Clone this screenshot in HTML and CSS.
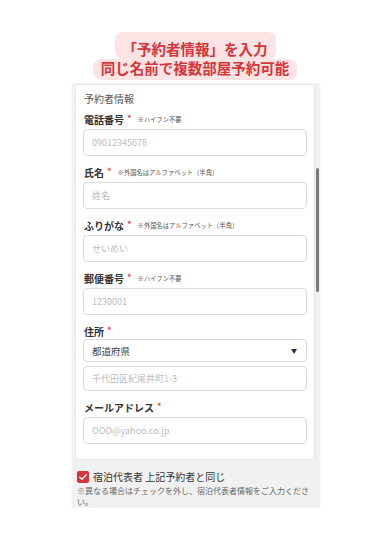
FILE: index.html
```html
<!DOCTYPE html>
<html lang="ja">
<head>
    <meta charset="UTF-8">
    <meta name="viewport" content="width=device-width, initial-scale=1.0">
    <title>予約者情報</title>
    <link rel="stylesheet" href="styles.css">
</head>
<body>
    <div class="hero">
        <span class="hero-line first">「予約者情報」を入力</span>
        <span class="hero-line second">同じ名前で複数部屋予約可能</span>
    </div>

    <div class="panel">
        <div class="scrollbar"></div>
        <div class="card">
            <h2 class="card-title">予約者情報</h2>

            <div class="field">
                <label class="label">電話番号<span class="req">*</span><span class="note">※ハイフン不要</span></label>
                <input class="input" type="text" placeholder="09012345678">
            </div>

            <div class="field">
                <label class="label">氏名<span class="req">*</span><span class="note">※外国名はアルファベット（半角）</span></label>
                <input class="input" type="text" placeholder="姓名">
            </div>

            <div class="field">
                <label class="label">ふりがな<span class="req">*</span><span class="note">※外国名はアルファベット（半角）</span></label>
                <input class="input" type="text" placeholder="せいめい">
            </div>

            <div class="field">
                <label class="label">郵便番号<span class="req">*</span><span class="note">※ハイフン不要</span></label>
                <input class="input" type="text" placeholder="1230001">
            </div>

            <div class="field">
                <label class="label tight">住所<span class="req">*</span></label>
                <div class="select">
                    <span>都道府県</span>
                    <span class="arrow">▼</span>
                </div>
                <input class="input address" type="text" placeholder="千代田区紀尾井町1-3">
            </div>

            <div class="field last">
                <label class="label">メールアドレス<span class="req">*</span></label>
                <input class="input" type="text" placeholder="OOO@yahoo.co.jp">
            </div>
        </div>

        <div class="same">
            <div class="check-row">
                <span class="checkbox">
                    <svg width="12" height="12" viewBox="0 0 12 12"><path d="M2.8 6.2 L5 8.3 L9.3 3.8" fill="none" stroke="#fff" stroke-width="1.4" stroke-linecap="round" stroke-linejoin="round"/></svg>
                </span>
                <span class="check-text">宿泊代表者 上記予約者と同じ</span>
            </div>
            <p class="same-note">※異なる場合はチェックを外し、宿泊代表者情報をご入力ください。</p>
        </div>
    </div>
</body>
</html>
```

FILE: styles.css
```css
body {
    margin: 0;
    background: #fff;
    font-family: "Noto Sans CJK JP", "Noto Sans", sans-serif;
    color: #333;
}
.hero {
    padding-top: 32px;
    display: flex;
    flex-direction: column;
    align-items: center;
    color: #d7343a;
    font-size: 14.5px;
    font-weight: bold;
    line-height: 18px;
}
.hero-line {
    background: #fde4e4;
    border-radius: 8px;
    padding: 8px 8px 1px;
}
.hero-line.second {
    padding: 0 8px 3px;
}
.panel {
    position: relative;
    margin: 3px 0 0 72px;
    width: 248px;
    background: #f1f1f1;
    padding: 1px 5px 0 3px;
    box-sizing: border-box;
    box-shadow: 0 1px 2px rgba(0,0,0,0.06);
}
.scrollbar {
    position: absolute;
    left: 244px;
    top: 85px;
    width: 2.5px;
    height: 124px;
    background: #7b7b7b;
    border-radius: 2px;
}
.card {
    background: #fff;
    border: 1px solid #e6e6e6;
    border-radius: 2px;
    padding: 8px 7px 15px;
}
.card-title {
    margin: 0 0 8px 1px;
    font-size: 10px;
    line-height: 12px;
    font-weight: normal;
    color: #555;
}
.field {
    margin-bottom: 10px;
}
.field.last {
    margin-bottom: 0;
}
.label {
    display: flex;
    align-items: center;
    font-size: 10px;
    line-height: 14px;
    font-weight: bold;
    color: #333;
    margin-bottom: 2px;
    padding-left: 1px;
}
.label.tight {
    margin-bottom: 0;
}
.req {
    color: #e04b50;
    margin-left: 3px;
    font-size: 9px;
    align-self: flex-start;
    line-height: 12px;
}
.note {
    font-size: 6.3px;
    font-weight: normal;
    color: #555;
    margin-left: 6px;
}
.input {
    display: block;
    width: 100%;
    height: 27px;
    box-sizing: border-box;
    border: 1px solid #dcdcdc;
    border-radius: 4px;
    padding: 0 8px;
    font-family: inherit;
    font-size: 9px;
    color: #333;
    background: #fff;
}
.input::placeholder {
    color: #bcbcbc;
}
.input.address {
    height: 25px;
    margin-top: 4px;
}
.select {
    display: flex;
    justify-content: space-between;
    align-items: center;
    height: 23px;
    box-sizing: border-box;
    border: 1px solid #dcdcdc;
    border-radius: 4px;
    padding: 0 9px 0 8px;
    font-size: 9.5px;
    color: #444;
}
.arrow {
    font-size: 6px;
    color: #1e2b45;
}
.same {
    padding: 10px 0 1px 2px;
}
.check-row {
    display: flex;
    align-items: center;
    gap: 4px;
}
.checkbox {
    display: inline-flex;
    width: 12px;
    height: 12px;
    background: #d7343a;
    border-radius: 2px;
}
.check-text {
    font-size: 10px;
    line-height: 14px;
    color: #333;
}
.same-note {
    margin: 1px 0 0;
    font-size: 8px;
    line-height: 11px;
    color: #666;
}
```
